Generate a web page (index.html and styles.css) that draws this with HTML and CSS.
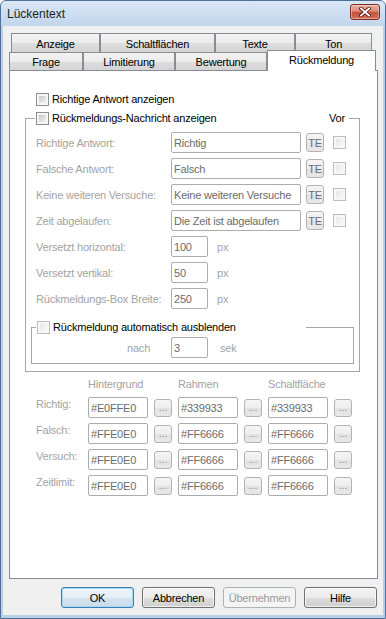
FILE: index.html
```html
<!DOCTYPE html>
<html lang="de">
<head>
<meta charset="utf-8">
<title>Lückentext</title>
<link rel="stylesheet" href="styles.css">
</head>
<body>
<div class="window">
  <div class="titlebar">
    <span class="title">Lückentext</span>
    <button class="close" aria-label="Schließen">
      <svg width="12" height="10" viewBox="0 0 12 10">
        <path d="M2 1.5 L10 8.5 M10 1.5 L2 8.5" stroke="#5a1d14" stroke-width="3.6" stroke-linecap="square" fill="none"/>
        <path d="M2 1.5 L10 8.5 M10 1.5 L2 8.5" stroke="#ffffff" stroke-width="1.8" stroke-linecap="square" fill="none"/>
      </svg>
    </button>
  </div>
  <div class="client">
    <div class="tabctl">
      <div class="tabrow tabrow-back">
        <div class="tab tab-anzeige">Anzeige</div>
        <div class="tab tab-schalt">Schaltflächen</div>
        <div class="tab tab-texte">Texte</div>
        <div class="tab tab-ton">Ton</div>
      </div>
      <div class="tabrow tabrow-front">
        <div class="tab tab-frage">Frage</div>
        <div class="tab tab-limit">Limitierung</div>
        <div class="tab tab-bewert">Bewertung</div>
        <div class="tab tab-active">Rückmeldung</div>
      </div>
      <div class="panel">
        <div class="chkrow top-chk"><span class="chk"></span><span>Richtige Antwort anzeigen</span></div>

        <fieldset class="group outer">
          <legend class="legend-outer">
            <span class="legend-inner">
              <span class="chkrow"><span class="chk"></span><span>Rückmeldungs-Nachricht anzeigen</span></span>
              <span class="vor">Vor</span>
            </span>
          </legend>
          <div class="form-grid">
            <span class="lbl">Richtige Antwort:</span>
            <input class="tb tb-wide" value="Richtig" readonly>
            <button class="te">TE</button>
            <span class="chk chk-dis"></span>

            <span class="lbl">Falsche Antwort:</span>
            <input class="tb tb-wide" value="Falsch" readonly>
            <button class="te">TE</button>
            <span class="chk chk-dis"></span>

            <span class="lbl">Keine weiteren Versuche:</span>
            <input class="tb tb-wide" value="Keine weiteren Versuche" readonly>
            <button class="te">TE</button>
            <span class="chk chk-dis"></span>

            <span class="lbl">Zeit abgelaufen:</span>
            <input class="tb tb-wide" value="Die Zeit ist abgelaufen" readonly>
            <button class="te">TE</button>
            <span class="chk chk-dis"></span>

            <span class="lbl">Versetzt horizontal:</span>
            <span class="tb-line"><input class="tb tb-short" value="100" readonly><span class="unit">px</span></span>

            <span class="lbl">Versetzt vertikal:</span>
            <span class="tb-line"><input class="tb tb-short" value="50" readonly><span class="unit">px</span></span>

            <span class="lbl">Rückmeldungs-Box Breite:</span>
            <span class="tb-line"><input class="tb tb-short" value="250" readonly><span class="unit">px</span></span>
          </div>

          <fieldset class="group inner">
            <legend class="legend-auto">
              <span class="chkrow"><span class="chk chk-dis"></span><span>Rückmeldung automatisch ausblenden</span></span>
            </legend>
            <div class="delay-row">
              <span class="nach">nach</span>
              <input class="tb tb-short" value="3" readonly>
              <span class="sek">sek</span>
            </div>
          </fieldset>
        </fieldset>

        <div class="color-grid">
          <span class="hdr hdr-bg">Hintergrund</span>
          <span class="hdr hdr-rahmen">Rahmen</span>
          <span class="hdr hdr-schalt">Schaltfläche</span>

          <span class="clbl">Richtig:</span>
          <input class="tb tb-color" value="#E0FFE0" readonly><button class="dots">...</button>
          <input class="tb tb-color" value="#339933" readonly><button class="dots">...</button>
          <input class="tb tb-color" value="#339933" readonly><button class="dots">...</button>

          <span class="clbl">Falsch:</span>
          <input class="tb tb-color" value="#FFE0E0" readonly><button class="dots">...</button>
          <input class="tb tb-color" value="#FF6666" readonly><button class="dots">...</button>
          <input class="tb tb-color" value="#FF6666" readonly><button class="dots">...</button>

          <span class="clbl">Versuch:</span>
          <input class="tb tb-color" value="#FFE0E0" readonly><button class="dots">...</button>
          <input class="tb tb-color" value="#FF6666" readonly><button class="dots">...</button>
          <input class="tb tb-color" value="#FF6666" readonly><button class="dots">...</button>

          <span class="clbl">Zeitlimit:</span>
          <input class="tb tb-color" value="#FFE0E0" readonly><button class="dots">...</button>
          <input class="tb tb-color" value="#FF6666" readonly><button class="dots">...</button>
          <input class="tb tb-color" value="#FF6666" readonly><button class="dots">...</button>
        </div>
      </div>
    </div>
    <div class="buttons">
      <button class="btn btn-default">OK</button>
      <button class="btn">Abbrechen</button>
      <button class="btn" disabled>Übernehmen</button>
      <button class="btn">Hilfe</button>
    </div>
  </div>
</div>
</body>
</html>
```

FILE: styles.css
```css
* { box-sizing: border-box; }
html, body { margin: 0; padding: 0; }
body {
  font-family: "Liberation Sans", Arial, sans-serif;
  font-size: 11px;
  letter-spacing: -0.2px;
  color: #000;
  background: #ffffff;
}

.window {
  width: 386px;
  height: 619px;
  border: 1px solid #4d6f98;
  border-radius: 6px 6px 0 0;
  background: #bad0ea;
  display: flex;
  flex-direction: column;
  overflow: hidden;
}

.titlebar {
  flex: none;
  height: 25px;
  display: flex;
  align-items: flex-start;
  padding: 0 5px 0 6px;
  background: linear-gradient(#d9e7f6, #c1d5ec);
}
.title {
  margin-top: 6px;
  font-size: 12px;
  line-height: 14px;
  letter-spacing: 0;
  color: #1e1e1e;
}
.close {
  margin: 3px 0 0 auto;
  width: 30px;
  height: 16px;
  padding: 0;
  border: 1px solid #7a2d24;
  border-radius: 3px;
  background: linear-gradient(#eab0a3, #dc8a78 45%, #c84f3b 52%, #d3705a);
  box-shadow: inset 0 0 0 1px rgba(255, 255, 255, 0.35);
  display: flex;
  align-items: center;
  justify-content: center;
}
.close svg { display: block; }

.client {
  flex: 1;
  margin: 0 2px 3px 2px;
  background: #f0f0f0;
  padding: 7px 5px 7px 6px;
  display: flex;
  flex-direction: column;
}

.tabctl {
  flex: 1;
  display: flex;
  flex-direction: column;
}
.tabrow { display: flex; flex: none; }
.tabrow-back { height: 19px; padding-left: 2px; }
.tabrow-front { height: 18px; align-items: flex-start; }

.tab {
  border: 1px solid #898c95;
  border-bottom: none;
  background: linear-gradient(#f3f3f3, #ebebeb 50%, #dedede 51%, #d4d4d4);
  text-align: center;
  line-height: 13px;
  white-space: nowrap;
  color: #000;
}
.tabrow-back .tab { height: 19px; padding-top: 4px; }
.tabrow-front .tab { height: 18px; padding-top: 3px; }
.tab-anzeige { width: 89px; }
.tab-schalt { width: 115px; }
.tab-texte { width: 80px; }
.tab-ton { width: 77px; }
.tab-frage { width: 74px; }
.tab-limit { width: 92px; }
.tab-bewert { width: 92px; }
.tabrow-front .tab-active {
  width: 109px;
  height: 21px;
  margin-top: -2px;
  background: #ffffff;
  position: relative;
  z-index: 1;
}

.panel {
  flex: 1;
  border: 1px solid #898c95;
  background: #ffffff;
  padding-top: 20px;
}

.chkrow {
  display: flex;
  align-items: center;
  gap: 3px;
  height: 16px;
  line-height: 16px;
  white-space: nowrap;
}
.top-chk { margin-left: 26px; }

.chk {
  flex: none;
  display: block;
  width: 13px;
  height: 13px;
  border: 1px solid #8e8f8f;
  padding: 2px;
  background: linear-gradient(135deg, #c9c9c9, #f3f3f3) content-box, #f6f6f6;
}
.chk-dis {
  border-color: #bdbdbd;
  background: linear-gradient(135deg, #e6e6e6, #f8f8f8) content-box, #f7f7f7;
}

.group {
  border: 1px solid #a6a6a6;
  margin: 0;
  min-width: 0;
}
.group > legend { padding: 0; height: 16px; }
.outer {
  width: 335px;
  margin: 3px 0 0 15px;
  padding: 6px 0 7px 0;
}
.legend-outer {
  width: 314px;
  margin-left: 9px;
}
.legend-inner {
  display: flex;
  justify-content: space-between;
  align-items: center;
  padding: 0 4px 0 1px;
  height: 16px;
}
.vor { line-height: 16px; }

.form-grid {
  display: grid;
  grid-template-columns: 135px 135px 27px 13px;
  grid-auto-rows: 21px;
  row-gap: 5px;
  padding-left: 10px;
  align-items: center;
}
.lbl { color: #a3a3a3; white-space: nowrap; }

.tb {
  display: block;
  height: 21px;
  margin: 0;
  border: 1px solid #acacac;
  border-radius: 2px;
  padding: 0 0 0 2px;
  font-family: "Liberation Sans", Arial, sans-serif;
  font-size: 11px;
  letter-spacing: -0.2px;
  color: #6b6b6b;
  background: #ffffff;
  outline: none;
}
.tb-wide { width: 130px; }
.tb-short { width: 37px; }
.tb-color { width: 60px; }

.tb-line {
  grid-column: 2 / span 3;
  display: flex;
  align-items: center;
}
.unit { margin-left: 9px; color: #a3a3a3; }

.te {
  width: 18px;
  height: 19px;
  padding: 0;
  border: 1px solid #b3b3b3;
  border-radius: 3px;
  background: linear-gradient(#f5f5f5, #ededed 50%, #e3e3e3 51%, #e8e8e8);
  font-family: "Liberation Sans", Arial, sans-serif;
  font-size: 11px;
  letter-spacing: -0.3px;
  color: #6b6b6b;
  text-align: center;
}

.inner {
  width: 323px;
  margin: 10px 0 0 5px;
  padding: 2px 0 5px 0;
}
.legend-auto {
  width: 270px;
  margin-left: 4px;
}
.legend-auto .chkrow { padding-left: 1px; }

.delay-row {
  display: flex;
  align-items: center;
  height: 21px;
  padding-left: 95px;
}
.nach { width: 44px; color: #a3a3a3; }
.sek { margin-left: 12px; color: #a3a3a3; }

.color-grid {
  display: grid;
  grid-template-columns: 46px 60px 18px 60px 18px 60px 18px;
  grid-template-rows: 14px repeat(4, 21px);
  column-gap: 6px;
  row-gap: 5px;
  margin: 6px 0 0 26px;
  align-items: center;
}
.hdr {
  grid-column: span 2;
  align-self: start;
  line-height: 13px;
  color: #a3a3a3;
  white-space: nowrap;
}
.hdr-bg { grid-column: 2 / span 2; }
.hdr-rahmen { grid-column: 4 / span 2; }
.hdr-schalt { grid-column: 6 / span 2; }
.clbl {
  align-self: start;
  padding-top: 1px;
  line-height: 13px;
  color: #a3a3a3;
}
.dots {
  width: 18px;
  height: 18px;
  padding: 0;
  border: 1px solid #b3b3b3;
  border-radius: 3px;
  background: linear-gradient(#f5f5f5, #ededed 50%, #e3e3e3 51%, #e8e8e8);
  font-family: "Liberation Sans", Arial, sans-serif;
  font-size: 10px;
  line-height: 16px;
  color: #8a8a8a;
  text-align: center;
}

.buttons {
  flex: none;
  display: flex;
  justify-content: flex-end;
  gap: 8px;
  margin-top: 8px;
  padding-right: 1px;
  height: 21px;
}
.btn {
  width: 73px;
  height: 21px;
  padding: 0;
  border: 1px solid #707070;
  border-radius: 3px;
  background: linear-gradient(#f2f2f2, #ebebeb 50%, #dddddd 51%, #cfcfcf);
  box-shadow: inset 0 0 0 1px rgba(255, 255, 255, 0.7);
  font-family: "Liberation Sans", Arial, sans-serif;
  font-size: 11px;
  letter-spacing: -0.2px;
  color: #000;
}
.btn-default {
  border-color: #3c7fb1;
  background: linear-gradient(#eef5fa, #e3eef6 50%, #d4e4ef 51%, #c9dcea);
  box-shadow: inset 0 0 0 1px #a9d6f3;
}
.btn:disabled {
  border-color: #adb2b5;
  background: #f4f4f4;
  box-shadow: none;
  color: #9a9a9a;
}
```
